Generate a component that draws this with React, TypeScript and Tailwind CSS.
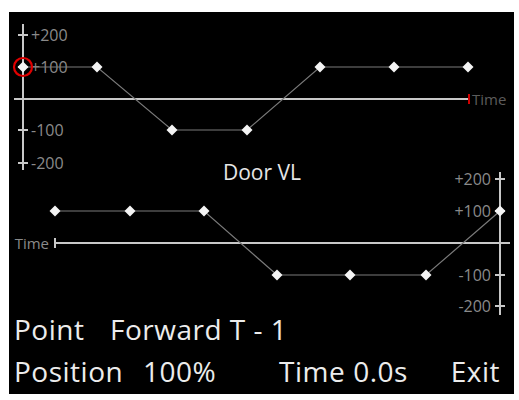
import React from "react";

type Pt = [number, number];

const topPoints: Pt[] = [
  [23, 67],
  [97, 67],
  [172, 130],
  [247, 130],
  [320, 67],
  [394, 67],
  [468, 67],
];

const bottomPoints: Pt[] = [
  [55, 211],
  [130, 211],
  [204, 211],
  [277, 275],
  [350, 275],
  [426, 275],
  [500, 211],
];

const Diamond = ({ x, y }: { x: number; y: number }) => (
  <polygon
    points={`${x},${y - 5.5} ${x + 5.5},${y} ${x},${y + 5.5} ${x - 5.5},${y}`}
    fill="#f4f4f4"
  />
);

const font = "'Open Sans', 'Noto Sans', sans-serif";

const DoorChart = () => {
  const labelFill = "#8a8a8a";
  return (
    <svg
      width={505}
      height={303}
      viewBox="9 12 505 303"
      className="block overflow-visible"
      style={{ fontFamily: font }}
    >
      {/* top chart axes */}
      <line x1={23} y1={24} x2={23} y2={170} stroke="#c8c8c8" strokeWidth={2} />
      {[35, 67, 130, 163].map((y) => (
        <line key={y} x1={18} y1={y} x2={28} y2={y} stroke="#c8c8c8" strokeWidth={2} />
      ))}
      <text x={31} y={35} dominantBaseline="central" fontSize={16} fill={labelFill}>+200</text>
      <text x={31} y={67} dominantBaseline="central" fontSize={16} fill={labelFill}>+100</text>
      <text x={31} y={130} dominantBaseline="central" fontSize={16} fill={labelFill}>-100</text>
      <text x={31} y={163} dominantBaseline="central" fontSize={16} fill={labelFill}>-200</text>
      <line x1={14} y1={99} x2={469} y2={99} stroke="#c8c8c8" strokeWidth={2} />
      <line x1={469} y1={94} x2={469} y2={104} stroke="#d00000" strokeWidth={2} />
      <text x={472} y={99} dominantBaseline="central" fontSize={15} fill="#5c5c5c">Time</text>

      <polyline
        points={topPoints.map((p) => p.join(",")).join(" ")}
        fill="none"
        stroke="#7a7a7a"
        strokeWidth={1.2}
      />
      {topPoints.map(([x, y]) => (
        <Diamond key={x} x={x} y={y} />
      ))}
      <circle cx={23} cy={67} r={9} fill="none" stroke="#e00000" strokeWidth={2.2} />

      <text x={262} y={172} textAnchor="middle" dominantBaseline="central" fontSize={21} fill="#e6e6e6">
        Door VL
      </text>

      {/* bottom chart axes */}
      <line x1={500} y1={172} x2={500} y2={315} stroke="#c8c8c8" strokeWidth={2} />
      {[179, 211, 275, 306].map((y) => (
        <line key={y} x1={495} y1={y} x2={505} y2={y} stroke="#c8c8c8" strokeWidth={2} />
      ))}
      <text x={491} y={179} textAnchor="end" dominantBaseline="central" fontSize={16} fill={labelFill}>+200</text>
      <text x={491} y={211} textAnchor="end" dominantBaseline="central" fontSize={16} fill={labelFill}>+100</text>
      <text x={491} y={275} textAnchor="end" dominantBaseline="central" fontSize={16} fill={labelFill}>-100</text>
      <text x={491} y={306} textAnchor="end" dominantBaseline="central" fontSize={16} fill={labelFill}>-200</text>
      <line x1={55} y1={243} x2={510} y2={243} stroke="#c8c8c8" strokeWidth={2} />
      <line x1={55} y1={238} x2={55} y2={248} stroke="#c8c8c8" strokeWidth={2} />
      <text x={49} y={243} textAnchor="end" dominantBaseline="central" fontSize={15} fill="#8a8a8a">Time</text>

      <polyline
        points={bottomPoints.map((p) => p.join(",")).join(" ")}
        fill="none"
        stroke="#7a7a7a"
        strokeWidth={1.2}
      />
      {bottomPoints.map(([x, y]) => (
        <Diamond key={x} x={x} y={y} />
      ))}
    </svg>
  );
};

export default function App() {
  return (
    <div className="min-h-screen bg-white pl-[9px] pt-[12px]">
      <div
        className="flex h-[382px] w-[505px] flex-col bg-black text-[#ececec]"
        style={{ fontFamily: font }}
      >
        <DoorChart />
        <div className="flex flex-col gap-[14px] px-[5px] text-[28px] leading-[28px] tracking-[0.5px]">
          <div className="flex">
            <span className="w-[96px]">Point</span>
            <span>Forward T - 1</span>
          </div>
          <div className="flex">
            <span className="w-[129px]">Position</span>
            <span className="w-[136px]">100%</span>
            <span className="mr-[8px]">Time</span>
            <span>0.0s</span>
            <span className="ml-auto pr-[9px]">Exit</span>
          </div>
        </div>
      </div>
    </div>
  );
}
